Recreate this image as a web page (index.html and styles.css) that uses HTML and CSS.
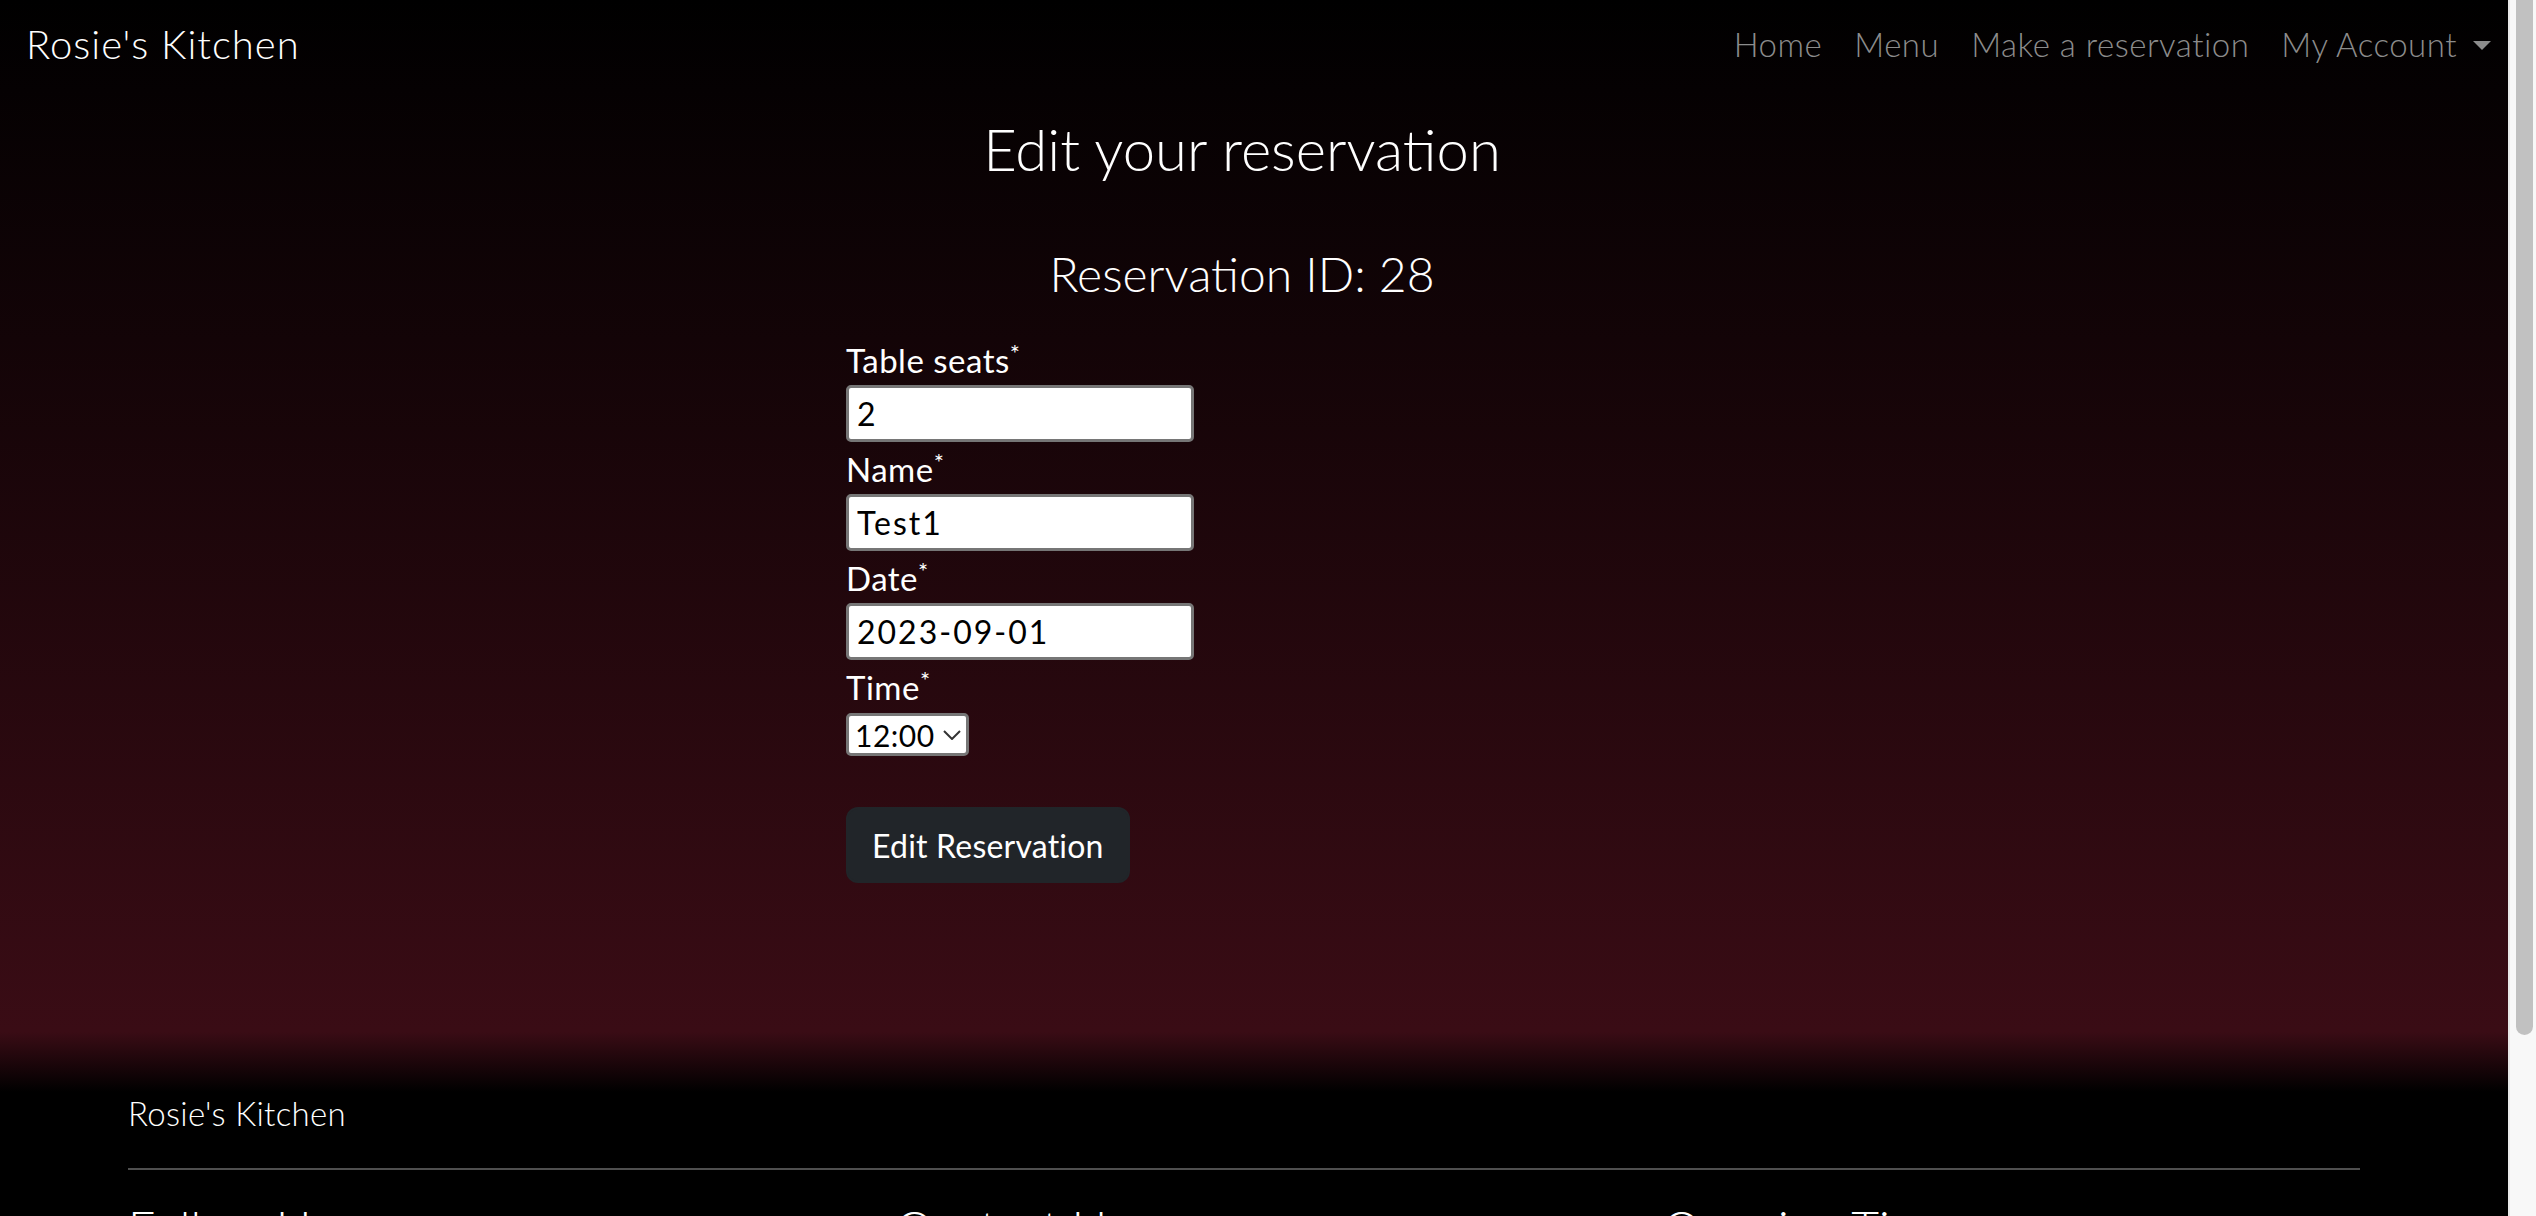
FILE: index.html
```html
<!DOCTYPE html>
<html lang="en">
<head>
<meta charset="utf-8">
<title>Rosie's Kitchen - Edit reservation</title>
<link rel="stylesheet" href="styles.css">
</head>
<body>
<div class="page-bg">
  <nav class="navbar">
    <a class="brand" href="#">Rosie's Kitchen</a>
    <ul class="nav-links">
      <li><a href="#">Home</a></li>
      <li><a href="#">Menu</a></li>
      <li><a href="#">Make a reservation</a></li>
      <li><a href="#" class="dropdown-toggle">My Account</a></li>
    </ul>
  </nav>
  <main class="main">
    <h1 class="title">Edit your reservation</h1>
    <h2 class="subtitle">Reservation ID: 28</h2>
    <form class="res-form">
      <label class="field-label" for="seats">Table seats<span class="req">*</span></label>
      <input class="field-input" id="seats" type="text" value="2">
      <label class="field-label" for="name">Name<span class="req">*</span></label>
      <input class="field-input" id="name" type="text" value="Test1">
      <label class="field-label" for="date">Date<span class="req">*</span></label>
      <input class="field-input" id="date" type="text" value="2023-09-01">
      <label class="field-label" for="time">Time<span class="req">*</span></label>
      <div class="select-wrap">
        <select class="field-select" id="time">
          <option>12:00</option>
          <option>13:00</option>
        </select>
        <svg class="select-chev" viewBox="0 0 18 10" width="18" height="10"><path d="M1 1 L9 9 L17 1" fill="none" stroke="#333" stroke-width="2"/></svg>
      </div>
      <button class="btn-dark" type="button">Edit Reservation</button>
    </form>
  </main>
</div>
<footer class="footer">
  <div class="footer-inner">
    <p class="footer-brand">Rosie's Kitchen</p>
    <hr class="footer-rule">
    <div class="footer-cols">
      <div class="footer-col">
        <h4 class="footer-head">Follow Us</h4>
        <p class="footer-text">Facebook</p>
        <p class="footer-text">Instagram</p>
      </div>
      <div class="footer-col">
        <h4 class="footer-head">Contact Us</h4>
        <p class="footer-text">01234 567890</p>
        <p class="footer-text">hello@rosieskitchen.com</p>
      </div>
      <div class="footer-col">
        <h4 class="footer-head">Opening Times</h4>
        <p class="footer-text">Mon - Sat: 12:00 - 22:00</p>
        <p class="footer-text">Sun: 12:00 - 18:00</p>
      </div>
    </div>
  </div>
</footer>
<div class="scrollbar" aria-hidden="true"><div class="scrollbar-thumb"></div></div>
</body>
</html>
```
FILE: styles.css
```css
html {
  background: #000;
  overflow: hidden;
}
body {
  margin: 0;
  padding-right: 28px;
  font-family: "Lato", "Open Sans", sans-serif;
  font-weight: 400;
  color: #fff;
  font-size: 32px;
}
.scrollbar {
  position: fixed;
  top: 0;
  right: 0;
  width: 26px;
  height: 100vh;
  background: #f8f8f8;
  border-left: 2px solid #e8e8e8;
}
.scrollbar-thumb {
  margin: 0 3px 0 6px;
  height: 1035px;
  background: #c1c1c1;
  border-radius: 0 0 9px 9px;
}
.page-bg {
  background: linear-gradient(to bottom, #000 0px, #050102 90px, #3a0c15 1030px);
}
.navbar {
  height: 88px;
  display: flex;
  align-items: center;
  justify-content: space-between;
  padding: 0 1px 0 26px;
}
.brand {
  color: #fff;
  text-decoration: none;
  font-size: 40px;
  font-weight: 300;
  letter-spacing: 1px;
}
.nav-links {
  list-style: none;
  display: flex;
  margin: 0;
  padding: 0;
}
.nav-links a {
  display: block;
  padding: 8px 16px;
  color: #8c8c8c;
  text-decoration: none;
  font-size: 33px;
  letter-spacing: 0.5px;
  font-weight: 300;
}
.dropdown-toggle::after {
  content: "";
  display: inline-block;
  margin-left: 16px;
  vertical-align: 7px;
  border-top: 9px solid #8c8c8c;
  border-left: 9px solid transparent;
  border-right: 9px solid transparent;
}
.main {
  padding: 0 24px 149px 0;
}
.title {
  margin: 22px 0 0;
  text-align: center;
  font-size: 58px;
  line-height: 77px;
  font-weight: 300;
}
.subtitle {
  margin: 56px 0 0;
  text-align: center;
  font-size: 48px;
  line-height: 62px;
  font-weight: 300;
}
.res-form {
  width: 792px;
  margin: 31px auto 0;
}
.field-label {
  display: block;
  height: 48px;
  line-height: 48px;
  font-size: 33px;
  letter-spacing: 0.5px;
  font-weight: 400;
}
.req {
  font-size: 24px;
  line-height: 0;
  position: relative;
  top: -11px;
}
.field-input {
  display: block;
  box-sizing: border-box;
  width: 348px;
  height: 57px;
  margin: 1px 0 3px;
  padding: 0 8px;
  border: 3px solid #767676;
  border-radius: 5px;
  background: #fff;
  font-family: inherit;
  font-size: 32px;
  letter-spacing: 2px;
  color: #000;
}
.select-wrap {
  position: relative;
  width: 123px;
  margin-top: 2px;
}
.field-select {
  display: block;
  box-sizing: border-box;
  width: 123px;
  height: 43px;
  padding: 0 0 0 6px;
  border: 3px solid #767676;
  border-radius: 5px;
  background: #fff;
  font-family: inherit;
  font-size: 30px;
  letter-spacing: 0.5px;
  color: #000;
  appearance: none;
  -webkit-appearance: none;
}
.select-chev {
  position: absolute;
  right: 8px;
  top: 17px;
  pointer-events: none;
}
.btn-dark {
  display: block;
  margin-top: 51px;
  height: 76px;
  padding: 0 24px;
  background: #212529;
  border: 2px solid #212529;
  border-radius: 12px;
  color: #fff;
  font-family: inherit;
  font-size: 32px;
  letter-spacing: 0.2px;
  font-weight: 400;
}
.footer {
  background: linear-gradient(to bottom, #3a0c15 0px, #000 60px);
  padding-top: 57px;
  padding-bottom: 40px;
}
.footer-inner {
  width: 2232px;
  margin-left: 128px;
}
.footer-brand {
  margin: 0;
  line-height: 48px;
  font-size: 33px;
  letter-spacing: 0.3px;
  font-weight: 300;
}
.footer-rule {
  margin: 31px 0 0;
  border: 0;
  border-top: 2px solid #4f4f4f;
}
.footer-cols {
  display: grid;
  grid-template-columns: repeat(3, 1fr);
  column-gap: 70px;
  margin-top: 29px;
}
.footer-head {
  margin: 0 0 16px;
  font-size: 48px;
  line-height: 58px;
  font-weight: 300;
}
.footer-text {
  margin: 0 0 8px;
  font-size: 28px;
  line-height: 42px;
  color: #cfcfcf;
}
```
